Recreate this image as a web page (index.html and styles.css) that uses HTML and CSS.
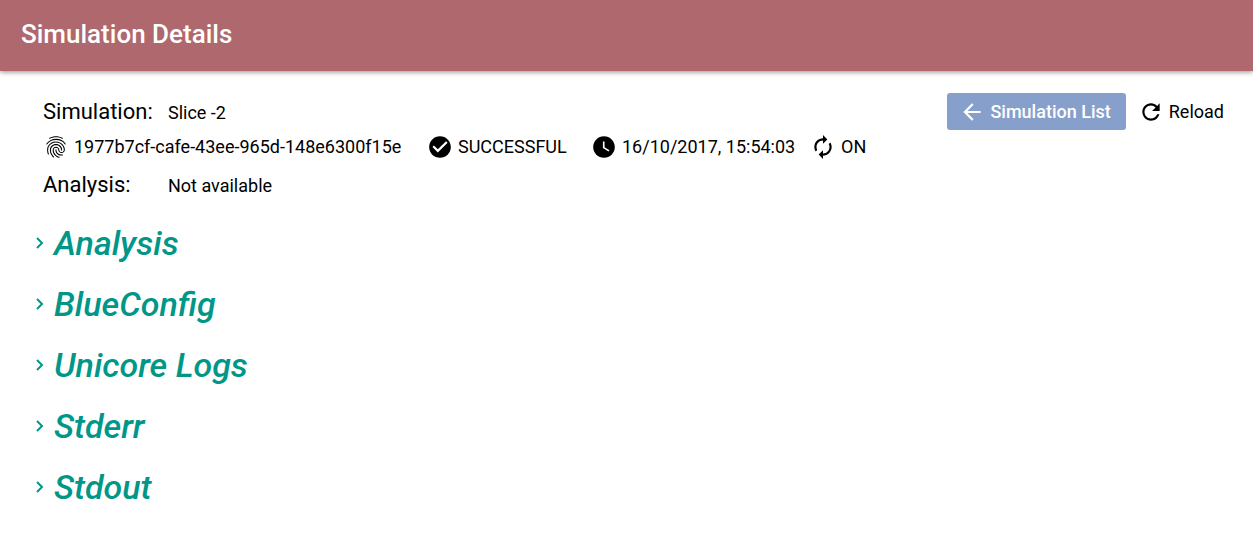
FILE: index.html
```html
<!DOCTYPE html>
<html lang="en">
<head>
<meta charset="utf-8">
<title>Simulation Details</title>
<link rel="stylesheet" href="styles.css">
</head>
<body>
<header class="app-bar"><h1 class="app-title">Simulation Details</h1></header>
<main class="content">
  <div class="overview">
    <section class="summary">
      <div class="row"><span class="label">Simulation:</span><span>Slice -2</span></div>
      <div class="facts">
        <span class="fact"><svg class="icon" viewBox="0 0 24 24" aria-hidden="true"><path d="M17.81 4.47c-.08 0-.16-.02-.23-.06C15.66 3.42 14 3 12.01 3c-1.98 0-3.86.47-5.57 1.41-.24.13-.54.04-.68-.2-.13-.24-.04-.55.2-.68C7.82 2.52 9.86 2 12.01 2c2.13 0 3.99.47 6.03 1.52.25.13.34.43.21.67-.09.18-.26.28-.44.28zM3.5 9.72c-.1 0-.2-.03-.29-.09-.23-.16-.28-.47-.12-.7.99-1.4 2.25-2.5 3.75-3.27C9.98 4.04 14 4.03 17.15 5.65c1.5.77 2.76 1.86 3.75 3.25.16.22.11.54-.12.7-.23.16-.54.11-.7-.12-.9-1.26-2.04-2.25-3.39-2.94-2.87-1.47-6.54-1.47-9.4.01-1.36.7-2.5 1.7-3.4 2.96-.08.14-.23.21-.39.21zm6.25 12.07c-.13 0-.26-.05-.35-.15-.87-.87-1.34-1.43-2.01-2.64-.69-1.23-1.05-2.73-1.05-4.34 0-2.97 2.54-5.39 5.66-5.39s5.66 2.42 5.66 5.39c0 .28-.22.5-.5.5s-.5-.22-.5-.5c0-2.42-2.09-4.39-4.66-4.39-2.57 0-4.66 1.97-4.66 4.39 0 1.44.32 2.77.93 3.85.64 1.15 1.08 1.64 1.85 2.42.19.2.19.51 0 .71-.11.1-.24.15-.37.15zm7.17-1.85c-1.19 0-2.24-.3-3.1-.89-1.49-1.01-2.38-2.65-2.38-4.39 0-.28.22-.5.5-.5s.5.22.5.5c0 1.41.72 2.74 1.94 3.56.71.48 1.54.71 2.54.71.24 0 .64-.03 1.04-.1.27-.05.53.13.58.41.05.27-.13.53-.41.58-.57.11-1.07.12-1.21.12zM14.91 22c-.04 0-.09-.01-.13-.02-1.59-.44-2.63-1.03-3.72-2.1-1.4-1.39-2.17-3.24-2.17-5.22 0-1.62 1.38-2.94 3.08-2.94 1.7 0 3.08 1.32 3.08 2.94 0 1.07.93 1.94 2.08 1.94s2.08-.87 2.08-1.94c0-3.77-3.25-6.83-7.25-6.83-2.84 0-5.44 1.58-6.61 4.03-.39.81-.59 1.76-.59 2.8 0 .78.07 2.01.67 3.61.1.26-.03.55-.29.64-.26.1-.55-.04-.64-.29-.49-1.31-.73-2.61-.73-3.96 0-1.2.23-2.29.68-3.24 1.33-2.79 4.28-4.6 7.51-4.6 4.55 0 8.25 3.51 8.25 7.83 0 1.62-1.38 2.94-3.08 2.94s-3.08-1.32-3.08-2.94c0-1.07-.93-1.94-2.08-1.94s-2.08.87-2.08 1.94c0 1.71.66 3.31 1.87 4.51.95.94 1.86 1.46 3.27 1.85.27.07.42.35.35.61-.05.23-.26.38-.47.38z"/></svg>1977b7cf-cafe-43ee-965d-148e6300f15e</span>
        <span class="fact"><svg class="icon" viewBox="0 0 24 24" aria-hidden="true"><path d="M12 2C6.48 2 2 6.48 2 12s4.48 10 10 10 10-4.48 10-10S17.52 2 12 2zm-2 15l-5-5 1.41-1.41L10 14.17l7.59-7.59L19 8l-9 9z"/></svg>SUCCESSFUL</span>
        <span class="fact"><svg class="icon" viewBox="0 0 24 24" aria-hidden="true"><path d="M12 2C6.5 2 2 6.5 2 12s4.500 10 10 10 10-4.500 10-10S17.500 2 12 2zm4.200 14.200L11 13V7h1.500v5.200l4.500 2.700-.8 1.300z"/></svg>16/10/2017, 15:54:03</span>
        <span class="fact"><svg class="icon" viewBox="0 0 24 24" aria-hidden="true"><path d="M12 6v3l4-4-4-4v3c-4.420 0-8 3.580-8 8 0 1.570.46 3.030 1.240 4.260L6.700 14.800c-.45-.83-.7-1.790-.7-2.800 0-3.310 2.690-6 6-6zm6.760 1.740L17.300 9.200c.44.84.7 1.790.7 2.800 0 3.310-2.690 6-6 6v-3l-4 4 4 4v-3c4.420 0 8-3.580 8-8 0-1.570-.46-3.030-1.240-4.260z"/></svg>ON</span>
      </div>
      <div class="row"><span class="label">Analysis:</span><span>Not available</span></div>
    </section>
    <div class="actions">
      <button class="button button-primary" type="button"><svg class="icon" viewBox="0 0 24 24" aria-hidden="true"><path d="M20 11H7.830l5.590-5.590L12 4l-8 8 8 8 1.410-1.410L7.830 13H20v-2z"/></svg>Simulation List</button>
      <button class="button" type="button"><svg class="icon" viewBox="0 0 24 24" aria-hidden="true"><path d="M17.650 6.350C16.200 4.900 14.210 4 12 4c-4.420 0-7.990 3.580-7.990 8s3.570 8 7.990 8c3.730 0 6.840-2.550 7.730-6h-2.080c-.82 2.330-3.040 4-5.650 4-3.310 0-6-2.690-6-6s2.690-6 6-6c1.660 0 3.140.69 4.220 1.780L13 11h7V4l-2.350 2.350z"/></svg>Reload</button>
    </div>
  </div>
  <div class="sections">
    <button class="section" type="button" aria-expanded="false"><svg class="chevron" viewBox="0 0 10 16" aria-hidden="true"><path d="M3 3l5 5-5 5"/></svg>Analysis</button>
    <button class="section" type="button" aria-expanded="false"><svg class="chevron" viewBox="0 0 10 16" aria-hidden="true"><path d="M3 3l5 5-5 5"/></svg>BlueConfig</button>
    <button class="section" type="button" aria-expanded="false"><svg class="chevron" viewBox="0 0 10 16" aria-hidden="true"><path d="M3 3l5 5-5 5"/></svg>Unicore Logs</button>
    <button class="section" type="button" aria-expanded="false"><svg class="chevron" viewBox="0 0 10 16" aria-hidden="true"><path d="M3 3l5 5-5 5"/></svg>Stderr</button>
    <button class="section" type="button" aria-expanded="false"><svg class="chevron" viewBox="0 0 10 16" aria-hidden="true"><path d="M3 3l5 5-5 5"/></svg>Stdout</button>
  </div>
</main>
</body>
</html>
```

FILE: styles.css
```css
* { box-sizing: border-box; }
body {
  margin: 0;
  background: #fff;
  color: #000;
  font-family: Roboto, "Liberation Sans", sans-serif;
  font-size: 18px;
  line-height: 24px;
}
.app-bar {
  padding: 18px 21px 21px;
  background: #af686d;
  color: #fff;
  box-shadow: 0 1px 5px rgba(0, 0, 0, 0.45);
}
.app-title {
  margin: 0;
  font-size: 26px;
  line-height: 32px;
  font-weight: 500;
}
.content { padding: 22px 29px 24px 34px; }
.overview {
  display: flex;
  justify-content: space-between;
  align-items: flex-start;
}
.summary { padding-left: 9px; }
.row {
  display: flex;
  align-items: baseline;
  line-height: 38px;
}
.label {
  width: 125px;
  font-size: 22px;
}
.facts {
  display: grid;
  grid-template-columns: 384px 164px 219px auto;
  align-items: center;
  padding: 2px 0 6px;
}
.fact {
  display: flex;
  align-items: center;
  gap: 5px;
}
.icon {
  flex: none;
  width: 26px;
  height: 26px;
  fill: currentColor;
}
.actions {
  display: flex;
  gap: 12px;
}
.button {
  display: flex;
  align-items: center;
  gap: 5px;
  height: 37px;
  padding: 0;
  border: 0;
  border-radius: 3px;
  background: none;
  color: inherit;
  font: inherit;
  white-space: nowrap;
}
.button-primary {
  padding: 0 15px 0 12px;
  background: #879fcb;
  color: #fff;
  font-weight: 500;
}
.sections {
  display: flex;
  flex-direction: column;
  align-items: flex-start;
  gap: 17px;
  padding-top: 16px;
}
.section {
  display: flex;
  align-items: center;
  gap: 10px;
  padding: 0;
  border: 0;
  background: none;
  color: #009688;
  font: italic 500 34px/44px Roboto, "Liberation Sans", sans-serif;
}
.chevron {
  width: 10px;
  height: 16px;
  fill: none;
  stroke: currentColor;
  stroke-width: 2;
}
```
